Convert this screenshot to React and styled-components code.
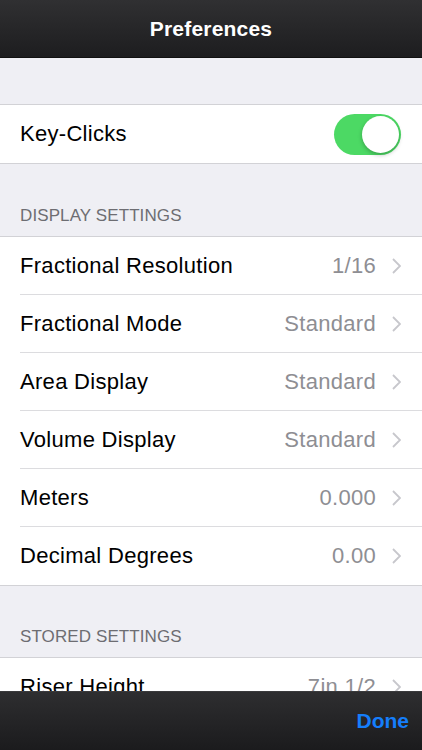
import React from 'react';
import styled, { createGlobalStyle } from 'styled-components';

const Global = createGlobalStyle`
  html, body { margin: 0; padding: 0; }
  body { font-family: "Liberation Sans", Arial, sans-serif; background: #efeff4; }
`;

const Screen = styled.div`
  width: 422px;
  height: 750px;
  display: flex;
  flex-direction: column;
  background: #efeff4;
  overflow: hidden;
`;

const NavBar = styled.div`
  height: 58px;
  flex-shrink: 0;
  display: flex;
  align-items: center;
  justify-content: center;
  background: linear-gradient(#303032, #1d1d1f);
  border-bottom: 1px solid #111;
  box-sizing: border-box;
`;

const Title = styled.div`
  color: #fff;
  font-size: 21px;
  font-weight: bold;
  letter-spacing: 0.2px;
`;

const Content = styled.div`
  flex: 1;
  overflow: hidden;
  padding-top: 46px;
`;

const Group = styled.div`
  background: #fff;
  border-top: 1px solid #d2d2d6;
  border-bottom: 1px solid #d2d2d6;
`;

const SectionHeader = styled.div`
  height: ${p => p.$h}px;
  box-sizing: border-box;
  display: flex;
  align-items: flex-end;
  padding: 0 20px 10px;
  color: #6d6d72;
  font-size: 17px;
  letter-spacing: 0.1px;
`;

const Row = styled.div`
  height: 58px;
  display: flex;
  align-items: center;
  padding-left: 20px;
  box-sizing: border-box;
`;

const RowInner = styled.div`
  flex: 1;
  height: 100%;
  display: flex;
  align-items: center;
  padding-right: 21px;
  border-bottom: ${p => (p.$last ? 'none' : '1px solid #dcdcdf')};
  box-sizing: border-box;
`;

const Label = styled.div`
  flex: 1;
  color: #000;
  font-size: 22px;
  letter-spacing: 0.3px;
`;

const Value = styled.div`
  color: #8e8e93;
  font-size: 22px;
  letter-spacing: 0.3px;
  margin-right: 16px;
`;

const Chevron = () => (
  <svg width="9" height="16" viewBox="0 0 9 16">
    <path d="M1 1l7 7-7 7" fill="none" stroke="#c7c7cc" strokeWidth="1.8" />
  </svg>
);

const Switch = styled.div`
  width: 67px;
  height: 41px;
  border-radius: 21px;
  background: #4cd964;
  position: relative;
  margin-right: 0;
`;

const Knob = styled.div`
  position: absolute;
  right: 2px;
  top: 2px;
  width: 37px;
  height: 37px;
  border-radius: 50%;
  background: #fff;
  box-shadow: 0 2px 4px rgba(0, 0, 0, 0.25);
`;

const ToolBar = styled.div`
  height: 59px;
  flex-shrink: 0;
  display: flex;
  align-items: center;
  justify-content: flex-end;
  padding-right: 13px;
  background: linear-gradient(#2e2e30, #1b1b1d);
  border-top: 1px solid #3a3a3c;
  box-sizing: border-box;
`;

const Done = styled.div`
  color: #157efb;
  font-size: 21px;
  font-weight: bold;
`;

const display = [
  ['Fractional Resolution', '1/16'],
  ['Fractional Mode', 'Standard'],
  ['Area Display', 'Standard'],
  ['Volume Display', 'Standard'],
  ['Meters', '0.000'],
  ['Decimal Degrees', '0.00'],
];

const stored = [['Riser Height', '7in 1/2']];

const Rows = ({ items }) =>
  items.map(([label, value], i) => (
    <Row key={label}>
      <RowInner $last={i === items.length - 1}>
        <Label>{label}</Label>
        <Value>{value}</Value>
        <Chevron />
      </RowInner>
    </Row>
  ));

export default function App() {
  return (
    <Screen>
      <Global />
      <NavBar>
        <Title>Preferences</Title>
      </NavBar>
      <Content>
        <Group>
          <Row>
            <RowInner $last>
              <Label>Key-Clicks</Label>
              <Switch>
                <Knob />
              </Switch>
            </RowInner>
          </Row>
        </Group>
        <SectionHeader $h={72}>DISPLAY SETTINGS</SectionHeader>
        <Group>
          <Rows items={display} />
        </Group>
        <SectionHeader $h={71}>STORED SETTINGS</SectionHeader>
        <Group>
          <Rows items={stored} />
        </Group>
      </Content>
      <ToolBar>
        <Done>Done</Done>
      </ToolBar>
    </Screen>
  );
}
